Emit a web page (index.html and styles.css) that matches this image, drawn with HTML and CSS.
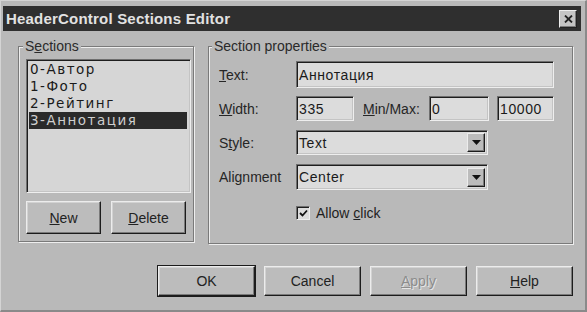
FILE: index.html
```html
<!DOCTYPE html>
<html>
<head>
<meta charset="utf-8">
<link rel="stylesheet" href="styles.css">
</head>
<body>
<div class="window">
  <div class="titlebar">
    <span class="title">HeaderControl Sections Editor</span>
    <span class="close"><svg width="9" height="8" viewBox="0 0 9 8"><path d="M1 0.5 L8 7.5 M8 0.5 L1 7.5" stroke="#222" stroke-width="1.8"/></svg></span>
  </div>
  <div class="main">
    <fieldset class="group sections">
      <legend>S<u>e</u>ctions</legend>
      <div class="listbox">
        <div class="item">0-Автор</div>
        <div class="item">1-Фото</div>
        <div class="item">2-Рейтинг</div>
        <div class="item selected">3-Аннотация</div>
      </div>
      <div class="list-buttons">
        <div class="btn small"><span><u>N</u>ew</span></div>
        <div class="btn small"><span><u>D</u>elete</span></div>
      </div>
    </fieldset>
    <fieldset class="group props">
      <legend>Section properties</legend>
      <div class="form">
        <div class="row r-text">
          <label class="lbl"><u>T</u>ext:</label>
          <div class="field wide">Аннотация</div>
        </div>
        <div class="row r-width">
          <label class="lbl"><u>W</u>idth:</label>
          <div class="field w-num">335</div>
          <label class="lbl minmax"><u>M</u>in/Max:</label>
          <div class="field w-min">0</div>
          <div class="field w-max">10000</div>
        </div>
        <div class="row r-style">
          <label class="lbl">S<u>t</u>yle:</label>
          <div class="field combo"><span class="val">Text</span><span class="drop"><svg width="9" height="5" viewBox="0 0 9 5"><path d="M0 0 H9 L4.5 5 Z" fill="#111"/></svg></span></div>
        </div>
        <div class="row r-align">
          <label class="lbl">Alignment</label>
          <div class="field combo"><span class="val">Center</span><span class="drop"><svg width="9" height="5" viewBox="0 0 9 5"><path d="M0 0 H9 L4.5 5 Z" fill="#111"/></svg></span></div>
        </div>
        <div class="row r-check">
          <span class="lbl"></span>
          <div class="check-wrap">
            <span class="checkbox"><svg width="9" height="9" viewBox="0 0 9 9"><path d="M1 4 L3.5 6.5 L8 1.5" stroke="#111" stroke-width="1.8" fill="none"/></svg></span>
            <span class="check-label">Allow <u>c</u>lick</span>
          </div>
        </div>
      </div>
    </fieldset>
  </div>
  <div class="footer">
    <div class="btn default"><span>OK</span></div>
    <div class="btn"><span>Cancel</span></div>
    <div class="btn disabled"><span><u>A</u>pply</span></div>
    <div class="btn"><span><u>H</u>elp</span></div>
  </div>
</div>
</body>
</html>
```
FILE: styles.css
```css
* { box-sizing: border-box; }
html, body { margin: 0; padding: 0; background: #b9b9b9; }
body { font-family: "Liberation Sans", Arial, sans-serif; font-size: 14px; color: #1e1e1e; }

.window {
  width: 587px; height: 312px;
  background: #b9b9b9;
  padding: 5px 4px 0 2px;
  display: flex; flex-direction: column;
  border-top: 1px solid #d4d4d4; border-left: 1px solid #d4d4d4;
  border-right: 2px solid #8a8a8a; border-bottom: 2px solid #8a8a8a;
}

.titlebar {
  height: 25px;
  background: #2f2f2f;
  color: #e2e2e2;
  display: flex; align-items: center; justify-content: space-between;
  padding: 0 4px 0 3px;
}
.title { font-weight: bold; font-size: 15px; letter-spacing: 0.2px; }
.close {
  width: 18px; height: 18px;
  background: #c4c4c4;
  display: flex; align-items: center; justify-content: center;
  border: 1px solid; border-color: #eee #222 #222 #eee;
  box-shadow: inset -1px -1px #7c7c7c;
}

.main { display: flex; margin-top: 7px; }

.group {
  margin: 0; padding: 0;
  border: 1px solid #7a7a7a;
  box-shadow: inset 1px 1px #eeeeee, 1px 1px #eeeeee;
  min-width: 0;
}
.group legend {
  padding: 0 2px;
  background: #b9b9b9;
  line-height: 16px;
  color: #2a2a2a;
}

.sections { width: 176px; height: 204px; margin-left: 15px; padding: 5px 0 0 7px; }
.sections legend { margin-left: -3px; }
.props { width: 365px; height: 206px; margin-left: 14px; padding: 7px 0 0 10px; }
.props legend { margin-left: -7px; }

.listbox {
  width: 165px; height: 134px;
  background: #d6d6d6;
  border: 1px solid; border-color: #6e6e6e #eeeeee #eeeeee #6e6e6e;
  box-shadow: inset 1px 1px #1e1e1e, inset -1px -1px #c4c4c4;
  padding: 1px 3px 0 2px;
}
.item {
  height: 17px; line-height: 17px;
  font-family: "DejaVu Sans", sans-serif; font-size: 13.5px; letter-spacing: 1.5px;
  padding-left: 1px;
  color: #1a1a1a;
}
.item.selected { background: #2a2a2a; color: #cfcfcf; }

.list-buttons { display: flex; gap: 10px; margin-top: 8px; }

.btn {
  width: 97px; height: 30px;
  background: #bcbcbc;
  border: 1px solid; border-color: #ececec #1c1c1c #1c1c1c #ececec;
  box-shadow: inset -1px -1px #7a7a7a, inset 1px 1px #d2d2d2;
  display: flex; align-items: center; justify-content: center;
  color: #222;
}
.btn.small { width: 75px; height: 33px; }
.btn.default { outline: 1px solid #1c1c1c; outline-offset: 0; box-shadow: inset -1px -1px #7a7a7a, inset 1px 1px #d2d2d2, 1px 1px 0 #1c1c1c; }
.btn.disabled span { color: #8c8c8c; text-shadow: 1px 1px #e6e6e6; }

.form { display: flex; flex-direction: column; }
.row { display: flex; align-items: center; }
.lbl { width: 77px; flex: none; color: #262626; }
.r-text { height: 27px; }
.r-width { height: 25px; margin-top: 8px; }
.r-style { height: 25px; margin-top: 9px; }
.r-align { height: 26px; margin-top: 9px; }
.r-check { height: 14px; margin-top: 16px; }

.field {
  height: 100%;
  background: #dcdcdc;
  border: 1px solid; border-color: #6e6e6e #eeeeee #eeeeee #6e6e6e;
  box-shadow: inset 1px 1px #1e1e1e, inset -1px -1px #c4c4c4;
  padding: 0 2px;
  display: flex; align-items: center;
  letter-spacing: 0.6px;
  color: #1a1a1a;
}
.wide { width: 258px; }
.w-num { width: 58px; }
.minmax { width: 66px; margin-left: 9px; }
.w-min { width: 60px; }
.w-max { width: 57px; margin-left: 8px; }
.combo { width: 192px; justify-content: space-between; padding-right: 2px; }
.drop {
  width: 18px; height: 19px;
  background: #bcbcbc;
  border: 1px solid; border-color: #ececec #1c1c1c #1c1c1c #ececec;
  box-shadow: inset -1px -1px #7a7a7a;
  display: flex; align-items: center; justify-content: center;
}

.check-wrap { display: flex; align-items: center; gap: 6px; }
.checkbox {
  width: 14px; height: 14px;
  background: #dcdcdc;
  border: 1px solid; border-color: #6e6e6e #eeeeee #eeeeee #6e6e6e;
  box-shadow: inset 1px 1px #1e1e1e;
  display: flex; align-items: center; justify-content: center;
}

.footer {
  display: flex; justify-content: flex-end; gap: 9px;
  margin-top: 22px; padding-right: 8px;
}
```
